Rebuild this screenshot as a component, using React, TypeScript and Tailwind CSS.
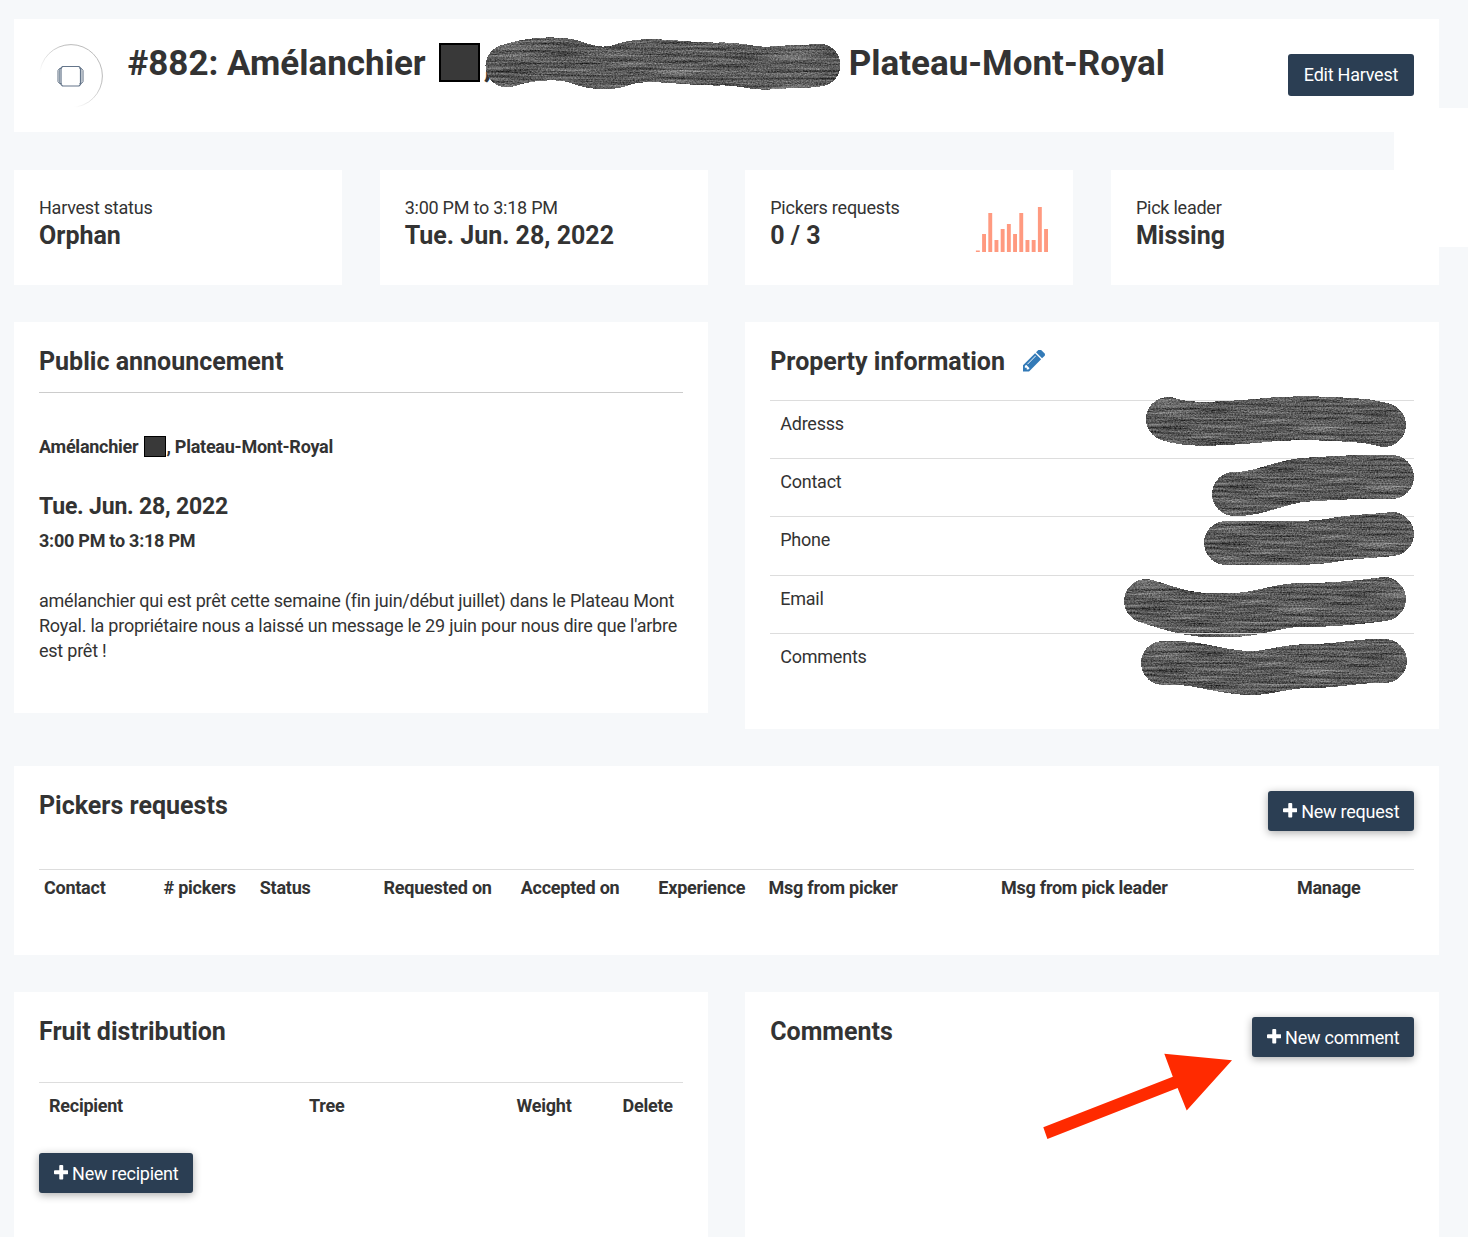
import type { ReactNode } from "react";

const PLUS =
  "M1600 736v192q0 40-28 68t-68 28h-416v416q0 40-28 68t-68 28h-192q-40 0-68-28t-28-68v-416h-416q-40 0-68-28t-28-68v-192q0-40 28-68t68-28h416v-416q0-40 28-68t68-28h192q40 0 68 28t28 68v416h416q40 0 68 28t28 68z";
const PENCIL =
  "M491 1536l91-91-235-235-91 91v107h128v128h107zm523-928q0-22-22-22-10 0-17 7l-542 542q-7 7-7 17 0 22 22 22 10 0 17-7l542-542q7-7 7-17zm-54-192l416 416-832 832h-416v-416zm683 96q0 53-37 90l-166 166-416-416 166-165q36-38 90-38 53 0 91 38l235 234q37 39 37 91z";

function Button({ children, className = "" }: { children: ReactNode; className?: string }) {
  return (
    <button
      className={`flex shrink-0 items-center justify-center rounded-[3px] bg-[#2b3e53] text-[18px] tracking-[-0.24px] whitespace-nowrap text-white ${className}`}
    >
      {children}
    </button>
  );
}

function Plus() {
  return (
    <svg viewBox="192 128 1408 1408" className="mr-[4px] mb-px size-[14.500px] shrink-0 fill-white">
      <path d={PLUS} />
    </svg>
  );
}

/* Brush stroke that hides private details; d is in the coordinates of its own box. */
function Scribble({ id, w, h, d, stroke = 44, freq = "0.02 0.42", className = "" }: {
  id: string; w: number; h: number; d: string; stroke?: number; freq?: string; className?: string;
}) {
  return (
    <svg width={w} height={h} viewBox={`0 0 ${w} ${h}`} className={`shrink-0 overflow-visible ${className}`}>
      <defs>
        <filter id={id} x="-2" y="-2" width={w + 4} height={h + 4} filterUnits="userSpaceOnUse" colorInterpolationFilters="sRGB">
          <feTurbulence type="fractalNoise" baseFrequency={freq} numOctaves="2" seed="7" result="grain" />
          <feColorMatrix in="grain" type="matrix" values="1 0 0 0 -0.15  1 0 0 0 -0.15  1 0 0 0 -0.15  0 0 0 0 1" result="lines" />
          <feTurbulence type="fractalNoise" baseFrequency="0.6 0.9" numOctaves="2" seed="3" result="fine" />
          <feColorMatrix in="fine" type="matrix" values="1.1 0 0 0 -0.18  1.1 0 0 0 -0.18  1.1 0 0 0 -0.18  0 0 0 0 1" result="dots" />
          <feComposite in="lines" in2="dots" operator="arithmetic" k2="0.55" k3="0.45" result="mix" />
          <feComposite in="mix" in2="SourceAlpha" operator="in" />
        </filter>
      </defs>
      <g filter={`url(#${id})`}>
        <path d={d} fill="none" stroke="#444" strokeWidth={stroke} strokeLinecap="round" strokeLinejoin="round" shapeRendering="crispEdges" />
      </g>
    </svg>
  );
}

function Stat({ label, value, children }: { label: string; value: string; children?: ReactNode }) {
  return (
    <div className="flex h-[115px] justify-between bg-white pt-[25px] pr-[25px] pl-[25px]">
      <div>
        <div className="text-[18px] leading-[25px] tracking-[-0.235px]">{label}</div>
        <div className="text-[25px] leading-[31px] font-bold">{value}</div>
      </div>
      {children}
    </div>
  );
}

const BARS = [1.5, 18, 39, 12, 23, 28, 18, 39, 12, 12, 45, 23];

const PROPERTY = [
  { label: "Adresss", id: "s1", w: 262, h: 51, box: "right-[7px] top-[-5px]", d: "M23 23C45 31 80 27 112 25C150 20 195 23 220 25Q232 27 239 29" },
  { label: "Contact", id: "s2", w: 202, h: 62, box: "right-0 top-[-4px]", d: "M22 39C45 40 65 28 90 25C120 23 155 21 180 22" },
  { label: "Phone", id: "s3", w: 210, h: 54, box: "right-0 top-[-5px]", d: "M22 31C60 29 105 34 135 27C155 24 175 24 188 22" },
  { label: "Email", id: "s4", w: 282, h: 61, box: "right-[8px] top-[1px]", d: "M22 24C45 31 65 40 100 38C140 39 150 26 190 28C222 27 240 25 260 22" },
  { label: "Comments", id: "s5", w: 266, h: 57, box: "right-[7px] top-[5px]", d: "M22 24C60 22 80 35 113 34C135 33 145 26 175 27C205 26 220 21 244 22" },
];

const REQUEST_COLS = ["Contact", "# pickers", "Status", "Requested on", "Accepted on", "Experience", "Msg from picker", "Msg from pick leader", "Manage"];

export default function App() {
  return (
    <div className="relative h-[1237px] w-[1468px] overflow-hidden bg-[#f6f8fa] pt-[19px] pr-[29px] pl-[14px] font-[Roboto,sans-serif] text-[#333]">
      <header className="flex h-[113px] bg-white px-[25px]">
        <svg width="64" height="64" viewBox="0 0 64 64" className="mt-[25px] shrink-0" fill="none">
          <defs>
            <linearGradient id="ring" x1="0.28" y1="0.72" x2="0.7" y2="0.3">
              <stop offset="0" stopColor="#bbb" stopOpacity="0" />
              <stop offset="1" stopColor="#bbb" />
            </linearGradient>
          </defs>
          <circle cx="32" cy="32" r="31.4" stroke="url(#ring)" />
          <path d="M22.500 24.500h-2l-1.500 2v11l1.500 2h2M40.500 24.500h2l1.500 2v11l-1.500 2h-2" stroke="#5d6d80" />
          <path d="M20.500 25v14M42 25v14" stroke="#8a99a8" />
          <path d="M23.500 22.500h16.500l1.500 1.500v16.500l-1.500 1.500h-16.500l-1.500-1.500v-16.500z" stroke="#64758a" strokeWidth="1.200" />
        </svg>
        <h1 className="ml-[24.500px] flex h-[88px] text-[35px] leading-[90px] font-bold whitespace-nowrap">
          #882: Amélanchier
          <span className="mt-6 ml-[13px] h-[39px] w-[41px] border-2 border-black bg-[#393939]" />
          <span className="relative mt-[19px] ml-[5px] h-[54px] w-[355px] leading-[54px]">
            <span className="absolute -left-[1px]">,</span>
            <Scribble id="s0" w={356} h={54} className="absolute top-0 left-0" stroke={43} freq="0.018 0.4"
              d="M22 28C45 20 75 19 90 24C106 30 122 33 140 26C165 18 200 27 235 26C262 25 264 33 300 29Q320 29 334 27" />
          </span>
          <span className="ml-[9px]">Plateau-Mont-Royal</span>
        </h1>
        <Button className="mt-[35px] ml-auto h-[42px] w-[126px] pb-px">Edit Harvest</Button>
      </header>

      <div className="absolute top-[108px] left-[1394px] h-[139px] w-[74px] bg-white" />

      <section className="mt-[38px] grid grid-cols-4 gap-[37.5px]">
        <Stat label="Harvest status" value="Orphan" />
        <Stat label="3:00 PM to 3:18 PM" value="Tue. Jun. 28, 2022" />
        <Stat label="Pickers requests" value="0 / 3">
          <svg width="73" height="45" viewBox="0 0 73 45" className="mt-3">
            {BARS.map((v, i) => (
              <rect key={i} x={0.9 + i * 6.2} y={45 - v} width="3.900" height={v} fill="#ff9a80" />
            ))}
          </svg>
        </Stat>
        <Stat label="Pick leader" value="Missing" />
      </section>

      <section className="mt-[37px] grid grid-cols-2 items-start gap-[37.5px]">
        <div className="h-[391px] bg-white px-[25px] pt-[25px]">
          <h2 className="h-[46px] border-b border-[#ccc] text-[25px] leading-[30px] font-bold">Public announcement</h2>
          <p className="mt-[41px] flex text-[18px] leading-[25px] font-bold tracking-[-0.25px] whitespace-pre">
            Amélanchier
            <span className="mt-0.5 ml-[6px] h-[21px] w-[22px] border border-black bg-[#393939]" />
            , Plateau-Mont-Royal
          </p>
          <p className="mt-[34px] text-[23px] leading-[28px] font-bold tracking-[-0.2px]">Tue. Jun. 28, 2022</p>
          <p className="mt-[7px] text-[18px] leading-[25px] font-bold tracking-[-0.25px]">3:00 PM to 3:18 PM</p>
          <p className="mt-[35px] text-[18px] leading-[25px] tracking-[-0.23px] whitespace-nowrap">
            amélanchier qui est prêt cette semaine (fin juin/début juillet) dans le Plateau Mont
            <br />
            Royal. la propriétaire nous a laissé un message le 29 juin pour nous dire que l'arbre
            <br />
            est prêt !
          </p>
        </div>
        <div className="h-[407px] bg-white px-[25px] pt-[25px]">
          <h2 className="flex h-[53px] text-[25px] leading-[30px] font-bold">
            Property information
            <svg viewBox="128 235 1515 1429" className="mt-[3px] ml-[18px] h-[22px] w-[22px] fill-[#337ab7]">
              <path d={PENCIL} />
            </svg>
          </h2>
          {PROPERTY.map((p) => (
            <div key={p.id} className="relative h-[58.2px] border-t border-[#ddd] pt-[10px] pl-[10px] text-[18px] leading-[25px] tracking-[-0.235px]">
              {p.label}
              <Scribble id={p.id} w={p.w} h={p.h} d={p.d} className={`absolute ${p.box}`} />
            </div>
          ))}
        </div>
      </section>

      <section className="mt-[37px] h-[189px] bg-white px-[25px] pt-[25px]">
        <div className="flex h-[78px] items-start justify-between">
          <h2 className="text-[25px] leading-[30px] font-bold">Pickers requests</h2>
          <Button className="h-10 w-[146px] shadow-[0_2px_8px_rgba(0,0,0,0.33)]"><Plus />New request</Button>
        </div>
        <div className="grid grid-cols-[119.6px_96.2px_123.8px_137.2px_137.6px_110.2px_232.4px_296px_122px] border-t border-[#ddd] pt-[5px] text-[18px] leading-[25px] font-bold tracking-[-0.25px] whitespace-nowrap">
          {REQUEST_COLS.map((c) => (
            <div key={c} className="pl-[5px]">{c}</div>
          ))}
        </div>
      </section>

      <section className="mt-[37px] grid grid-cols-2 gap-[37.5px]">
        <div className="h-[260px] bg-white px-[25px] pt-[25px]">
          <h2 className="h-[65px] text-[25px] leading-[30px] font-bold">Fruit distribution</h2>
          <div className="grid grid-cols-[260px_207.600px_106px_70px] border-t border-[#ddd] pt-[10px] text-[18px] leading-[25px] font-bold tracking-[-0.25px]">
            <div className="pl-[10px]">Recipient</div>
            <div className="pl-[10px]">Tree</div>
            <div className="pl-[10px]">Weight</div>
            <div className="pl-[10px]">Delete</div>
          </div>
          <Button className="mt-[35px] h-10 w-[154px] shadow-[0_2px_8px_rgba(0,0,0,0.33)]"><Plus />New recipient</Button>
        </div>
        <div className="relative h-[260px] bg-white px-[25px] pt-[25px]">
          <div className="flex items-start justify-between">
            <h2 className="text-[25px] leading-[30px] font-bold">Comments</h2>
            <Button className="h-10 w-[162px] shadow-[0_2px_8px_rgba(0,0,0,0.33)]"><Plus />New comment</Button>
          </div>
          <svg width="190" height="87" viewBox="1043 1053 190 87" className="absolute top-[61px] left-[298px] fill-[#ff2a00]">
            <path d="M1043.300 1127.300L1172.800 1076.800L1164.300 1053.800L1232 1060.200L1186.700 1110.500L1177.600 1088L1047.400 1139Z" />
          </svg>
        </div>
      </section>
    </div>
  );
}
